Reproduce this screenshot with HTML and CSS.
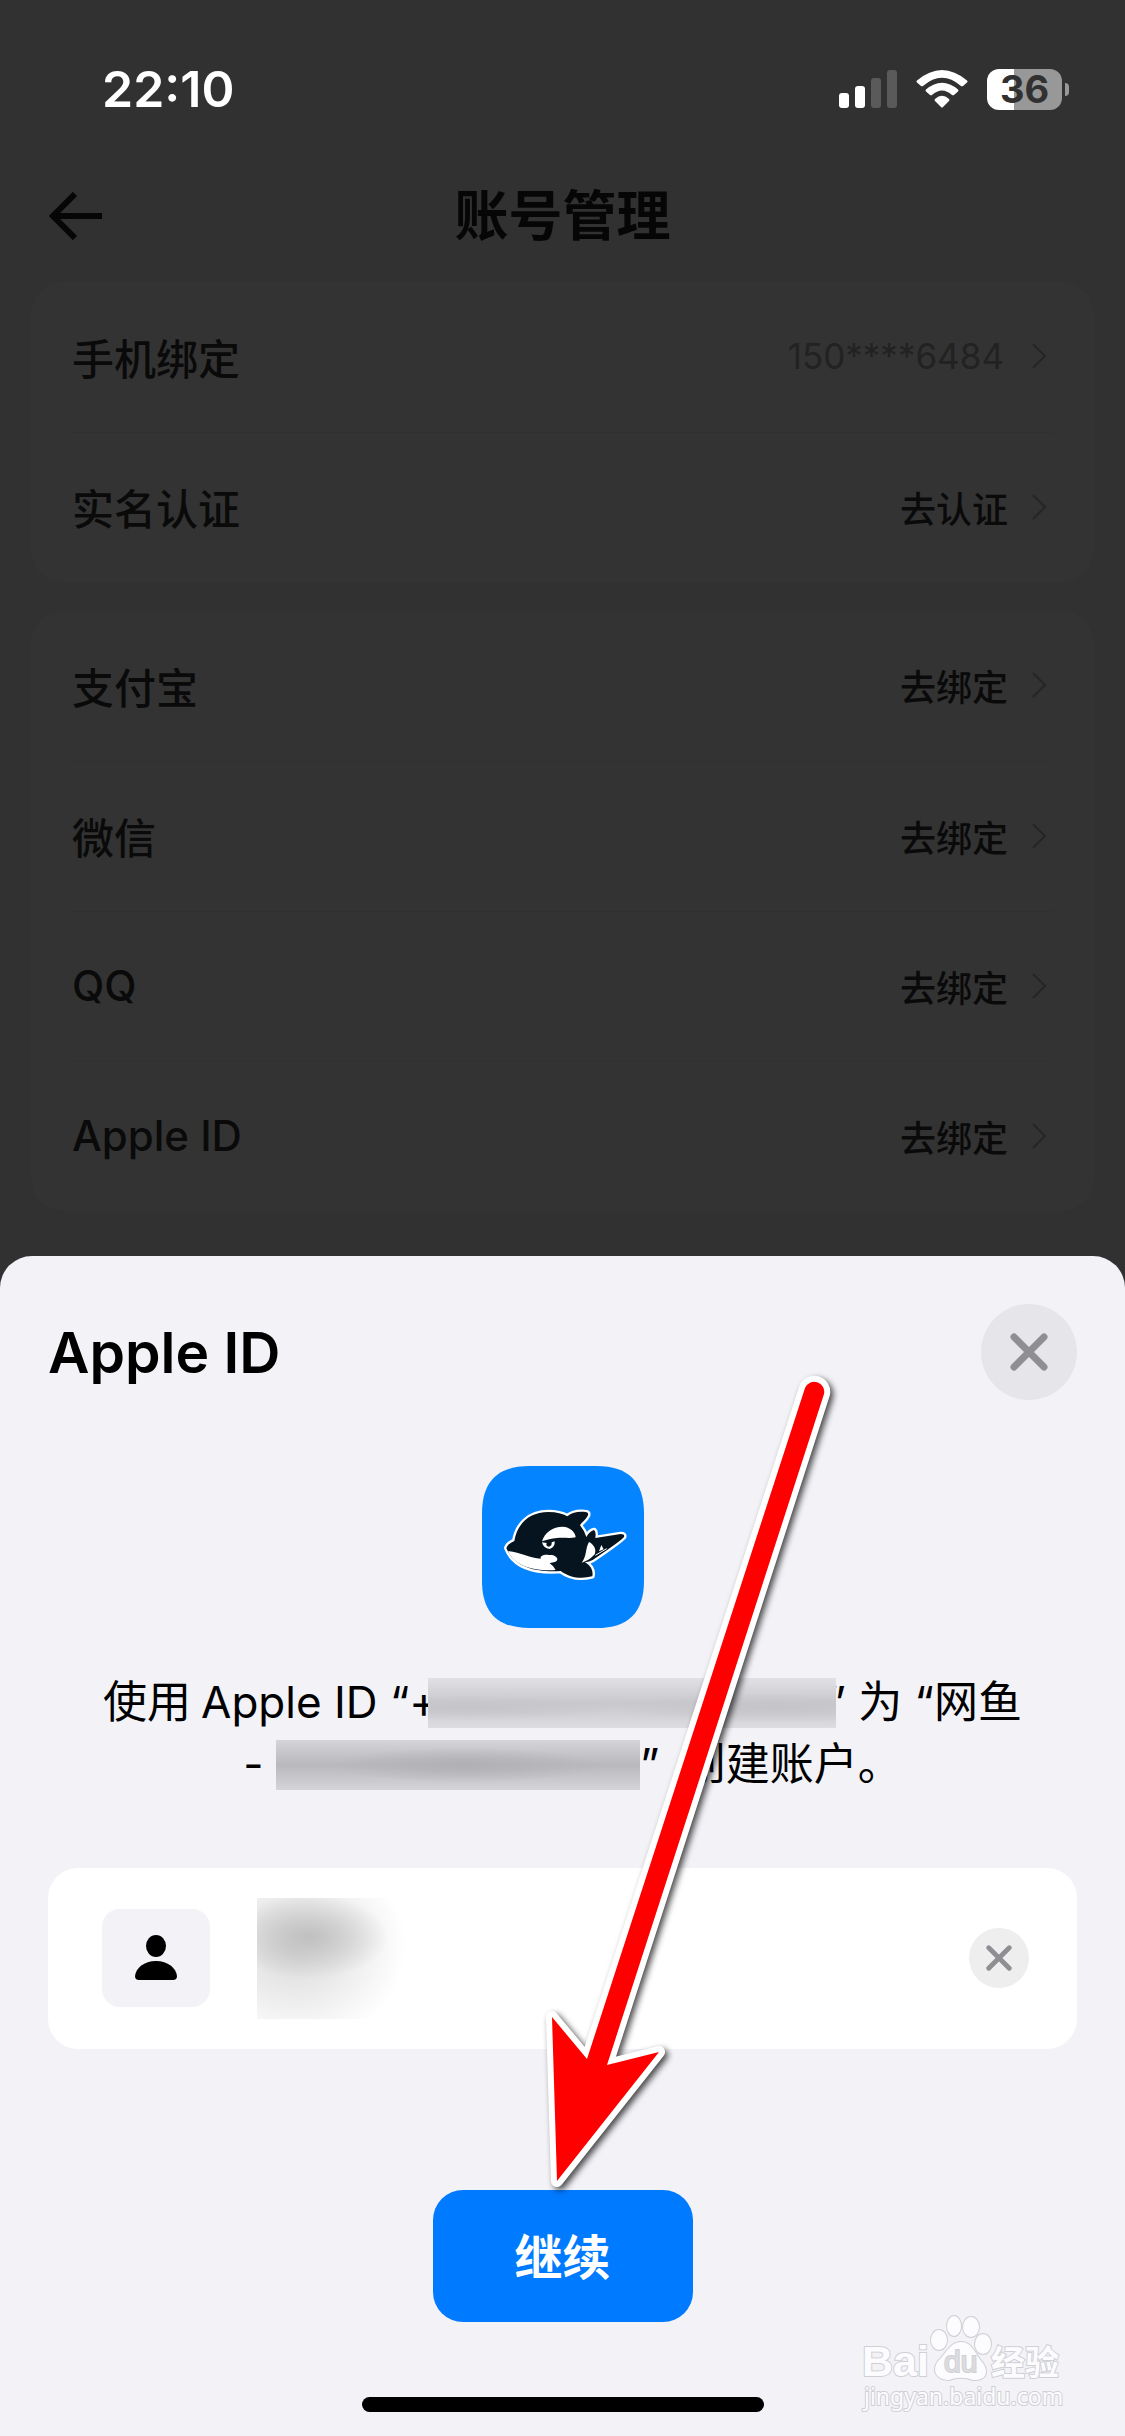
FILE: index.html
```
<!DOCTYPE html>
<html lang="zh-CN">
<head>
    <meta charset="UTF-8">
    <meta name="viewport" content="width=device-width, initial-scale=1.0">
    <title>账号管理</title>
    <link rel="stylesheet" href="styles.css">
</head>
<body>
    <div class="page">
        <div class="status-bar">
            <span class="time">22:10</span>
            <div class="status-icons">
                <svg width="58" height="38" viewBox="0 0 58 38">
                    <rect x="0" y="23" width="10" height="15" rx="3" fill="#fff"/>
                    <rect x="16" y="16" width="10" height="22" rx="3" fill="#fff"/>
                    <rect x="32" y="8" width="10" height="30" rx="3" fill="#5a5a5a"/>
                    <rect x="48" y="0" width="10" height="38" rx="3" fill="#5a5a5a"/>
                </svg>
                <svg width="52" height="38" viewBox="0 0 52 38" fill="#fff">
                    <path d="M1 10.500Q26-10.500 51 10.500Q52 11.500 51 12.500L47 16Q46 16.700 45 16Q26-.5 7 16Q6 16.700 5 16L1 12.500Q0 11.500 1 10.500Z"/>
                    <path d="M10 19.500Q26 6 42 19.500Q43 20.500 42 21.500L38 25Q37 25.700 36 25Q26 16 16 25Q15 25.700 14 25L10 21.500Q9 20.500 10 19.500Z"/>
                    <path d="M19 29Q26 22.500 33 29Q34 30 33 31L27 37Q26 38 25 37L19 31Q18 30 19 29Z"/>
                </svg>
                <div class="battery"><span>36</span></div>
            </div>
        </div>

        <header class="nav">
            <button class="back" aria-label="返回">
                <svg width="54" height="48" viewBox="0 0 54 48" fill="none" stroke="#060606" stroke-width="6">
                    <path d="M53 24H5M26 2L4 24L26 46"/>
                </svg>
            </button>
            <h1>账号管理</h1>
        </header>

        <nav class="card">
            <a href="#" class="row">
                <span class="label">手机绑定</span>
                <span class="value muted">150****6484</span>
                <svg class="chevron" viewBox="0 0 15 26"><path d="M1 1L13 13L1 25"/></svg>
            </a>
            <a href="#" class="row">
                <span class="label">实名认证</span>
                <span class="value">去认证</span>
                <svg class="chevron" viewBox="0 0 15 26"><path d="M1 1L13 13L1 25"/></svg>
            </a>
        </nav>

        <nav class="card">
            <a href="#" class="row">
                <span class="label">支付宝</span>
                <span class="value">去绑定</span>
                <svg class="chevron" viewBox="0 0 15 26"><path d="M1 1L13 13L1 25"/></svg>
            </a>
            <a href="#" class="row">
                <span class="label">微信</span>
                <span class="value">去绑定</span>
                <svg class="chevron" viewBox="0 0 15 26"><path d="M1 1L13 13L1 25"/></svg>
            </a>
            <a href="#" class="row">
                <span class="label">QQ</span>
                <span class="value">去绑定</span>
                <svg class="chevron" viewBox="0 0 15 26"><path d="M1 1L13 13L1 25"/></svg>
            </a>
            <a href="#" class="row">
                <span class="label">Apple ID</span>
                <span class="value">去绑定</span>
                <svg class="chevron" viewBox="0 0 15 26"><path d="M1 1L13 13L1 25"/></svg>
            </a>
        </nav>
    </div>

    <section class="sheet">
        <div class="sheet-header">
            <h2>Apple ID</h2>
            <button class="round close" aria-label="关闭">
                <svg width="38" height="38" viewBox="0 0 38 38"><path d="M4 4L34 34M34 4L4 34"/></svg>
            </button>
        </div>

        <!-- app icon -->
        <svg class="app-icon" viewBox="66 78 486 486">
            <path fill="#0584ff" d="M66 220C66 125 113 78 208 78H410C505 78 552 125 552 220V422C552 517 505 564 410 564H208C113 564 66 517 66 422Z"/>
            <path fill="#06141f" stroke="#fff" stroke-width="14" stroke-linejoin="round" paint-order="stroke" d="M139 324Q142 312 163 303C171 254 205 216 266 216C290 216 308 221 322 229C340 215 360 214 380 217Q386 219 384 226C376 242 364 248 360 256Q372 270 379 291Q388 274 402 270Q409 275 406 294L482 282Q495 282 492 291Q489 298 398 360Q388 366 375 367C389 375 401 389 397 409C365 417 332 415 302 393C243 397 165 390 139 324Z"/>
            <path fill="#fff" d="M144 333C183 338 211 354 242 356C240 345 256 343 266 345C280 343 293 350 292 359C289 369 273 366 269 370Q278 375 287 390C235 394 165 384 144 333Z"/>
            <path fill="#fff" d="M246 304C254 277 279 260 308 260C330 261 347 277 347 292C330 296 310 292 291 294C274 295 260 300 246 304Z"/>
            <path fill="#fff" d="M246 307L260 309Q256 319 267 320Q276 318 275 307L284 304Q286 321 269 327Q250 325 246 307Z"/>
            <path fill="#fff" d="M387 306C403 314 410 330 404 343C394 355 380 364 365 368C382 347 375 325 387 306ZM424 315L431 328L417 334Z"/>
            <path fill="none" stroke="#fff" stroke-width="3" d="M406 346L440 326"/>
        </svg>

        <p class="message">使用<span class="thin"></span>Apple ID “+<span class="redacted id"></span>” 为 “网鱼<br><span class="thin"></span><span class="thin"></span>- <span class="redacted name"></span>”<span class="thin"></span> 创建账户。</p>

        <div class="account">
            <div class="avatar">
                <svg width="42" height="46" viewBox="0 0 42 46">
                    <ellipse cx="21" cy="11" rx="10" ry="11"/>
                    <path d="M0 41C1 33 9 26 21 26S41 33 42 41Q42 45 38 45H4Q0 45 0 41Z"/>
                </svg>
            </div>
            <div class="smudge"></div>
            <button class="round clear" aria-label="清除">
                <svg width="26" height="26" viewBox="0 0 38 38"><path d="M4 4L34 34M34 4L4 34"/></svg>
            </button>
        </div>

        <button class="continue">继续</button>
        <div class="home-bar"></div>

        <!-- pointer to the continue button -->
        <svg class="pointer" width="320" height="840" viewBox="535 1360 320 840">
            <path d="M805 1388A10 10 0 0 1 824 1394L607 2065L659 2052L557 2181L552 2017L587 2059Z"/>
        </svg>

        <svg class="watermark" width="210" height="106" viewBox="860 2310 210 106">
            <ellipse cx="939" cy="2340" rx="8" ry="10"/>
            <ellipse cx="954" cy="2326" rx="7" ry="10"/>
            <ellipse cx="971" cy="2327" rx="8" ry="10"/>
            <ellipse cx="983" cy="2344" rx="8" ry="10"/>
            <path d="M961 2342C973 2342 975 2355 983 2363C990 2374 984 2381 973 2380C965 2377 957 2377 949 2380C937 2380 931 2371 938 2361C946 2354 950 2342 961 2342Z"/>
            <text class="wm-brand" x="862" y="2376">Bai</text>
            <text class="wm-du" x="944" y="2372">du</text>
            <text class="wm-cn" x="991" y="2375">经验</text>
            <text class="wm-url" x="864" y="2405">jingyan.baidu.com</text>
        </svg>
    </section>
</body>
</html>
```
FILE: styles.css
```
* {
    box-sizing: border-box;
}
body {
    margin: 0;
    min-height: 100vh;
    display: flex;
    flex-direction: column;
    background-color: #313131;
    font-family: Inter, "Noto Sans CJK SC", sans-serif;
}
h1, h2, p {
    margin: 0;
}
button {
    border: none;
    padding: 0;
    font-family: inherit;
    cursor: pointer;
}
svg {
    display: block;
    flex-shrink: 0;
}

/* dimmed page */
.page {
    padding: 0 31px 45px;
}
.status-bar {
    height: 166px;
    padding: 12px 25px 0 71px;
    display: flex;
    align-items: center;
    justify-content: space-between;
    color: white;
}
.time {
    font-size: 50px;
    font-weight: 600;
}
.status-icons {
    display: flex;
    align-items: center;
    gap: 19px;
}
.battery {
    position: relative;
    width: 75px;
    height: 41px;
    margin-right: 7px;
    border-radius: 12px;
    background: linear-gradient(to right, #fff 36%, #989898 36%);
    color: #313131;
    font-size: 38px;
    font-weight: 700;
    line-height: 41px;
    text-align: center;
}
.battery::after {
    content: "";
    position: absolute;
    left: 78px;
    top: 14px;
    width: 4px;
    height: 13px;
    border-radius: 0 4px 4px 0;
    background-color: #989898;
}
.nav {
    height: 116px;
    padding: 0 18px 16px;
    display: grid;
    grid-template-columns: 54px 1fr 54px;
    align-items: center;
}
.back {
    background: none;
}
.nav h1 {
    padding-bottom: 8px;
    text-align: center;
    font-size: 54px;
    font-weight: 700;
    color: #060606;
}
.card {
    padding: 0 41px;
    border-radius: 32px;
    background-color: #333333;
}
.card + .card {
    margin-top: 29px;
}
.row {
    height: 150px;
    padding: 0 6px 2px 0;
    display: flex;
    align-items: center;
    color: #0a0a0a;
    text-decoration: none;
}
.row + .row {
    border-top: 1px solid #303030;
}
.label {
    flex: 1;
    font-size: 42px;
    font-weight: 500;
}
.value {
    font-size: 36px;
    font-weight: 500;
    margin-right: 24px;
}
.muted {
    color: #222222;
    font-size: 35px;
    font-weight: 400;
    margin-right: 28px;
}
.chevron {
    width: 15px;
    height: 26px;
    fill: none;
    stroke: #252525;
    stroke-width: 2;
}

/* bottom sheet */
.sheet {
    position: relative;
    flex: 1;
    padding: 48px 48px 24px;
    display: flex;
    flex-direction: column;
    align-items: center;
    border-radius: 32px 32px 0 0;
    background-color: #f2f2f7;
}
.sheet-header {
    width: 100%;
    display: flex;
    align-items: center;
    justify-content: space-between;
}
.sheet-header h2 {
    font-size: 57px;
    font-weight: 600;
}
.round {
    display: flex;
    align-items: center;
    justify-content: center;
    border-radius: 50%;
    background-color: #e5e5ea;
}
.round path {
    stroke: #8e8e93;
    stroke-width: 7;
    stroke-linecap: round;
}
.close {
    width: 96px;
    height: 96px;
}
.app-icon {
    width: 162px;
    height: 162px;
    margin-top: 66px;
}
.message {
    margin-top: 44px;
    font-size: 44px;
    line-height: 61px;
    text-align: center;
    white-space: nowrap;
}
.thin {
    display: inline-block;
    width: 10px;
}
.redacted {
    display: inline-block;
    height: 50px;
    margin-bottom: 6px;
    vertical-align: middle;
}
/* covers half of the characters on both sides */
.id {
    position: relative;
    width: 408px;
    margin-left: -10px;
    margin-right: -10px;
    background: radial-gradient(ellipse at 10% 60%, #c4c4c9, transparent 30%),
        radial-gradient(ellipse at 85% 60%, #c4c4c9, transparent 35%),
        linear-gradient(#e0e0e5, #c8c8cd 50%, #dcdce1);
}
.name {
    width: 364px;
    background: radial-gradient(ellipse at 52% 50%, #b0b0b5, transparent 50%),
        linear-gradient(#d4d4d9, #b8b8bd 50%, #d4d4d9);
}
.account {
    width: 100%;
    height: 181px;
    margin-top: 72px;
    padding: 0 48px 0 54px;
    display: flex;
    align-items: center;
    border-radius: 30px;
    background-color: white;
}
.avatar {
    width: 108px;
    height: 98px;
    display: flex;
    align-items: center;
    justify-content: center;
    border-radius: 18px;
    background-color: #f2f2f7;
}
.smudge {
    width: 148px;
    height: 121px;
    margin-left: 47px;
    background: radial-gradient(ellipse 80px 42px at 35% 32%, #c0c0c0, transparent),
        radial-gradient(ellipse 112px 100px at 25% 40%, #d8d8d8, transparent);
}
.clear {
    width: 60px;
    height: 60px;
    margin-left: auto;
    background-color: #eeeeef;
}
.continue {
    width: 260px;
    height: 132px;
    margin-top: 141px;
    padding-bottom: 4px;
    border-radius: 30px;
    background-color: #007aff;
    color: white;
    font-size: 48px;
    font-weight: 700;
}
.home-bar {
    width: 402px;
    height: 15px;
    margin-top: auto;
    border-radius: 8px;
    background-color: black;
}
.pointer {
    position: absolute;
    left: 535px;
    top: 104px;
    overflow: visible;
    pointer-events: none;
    fill: red;
    stroke: white;
    stroke-width: 12;
    stroke-linejoin: round;
    paint-order: stroke;
    filter: drop-shadow(3px 3px 3px rgba(0, 0, 0, 0.7));
}
.watermark {
    position: absolute;
    right: 55px;
    bottom: 20px;
    fill: #fcfcff;
    stroke: #d0d0d4;
    stroke-width: 2;
    paint-order: stroke;
}
.wm-brand {
    font-family: "Liberation Sans", sans-serif;
    font-size: 43px;
    font-weight: 700;
}
.wm-du {
    font-family: "Liberation Sans", sans-serif;
    font-size: 30px;
    fill: #dcdce0;
}
.wm-cn {
    font-size: 34px;
    font-weight: 700;
}
.wm-url {
    font-family: "Noto Sans", sans-serif;
    font-size: 23px;
}
```
